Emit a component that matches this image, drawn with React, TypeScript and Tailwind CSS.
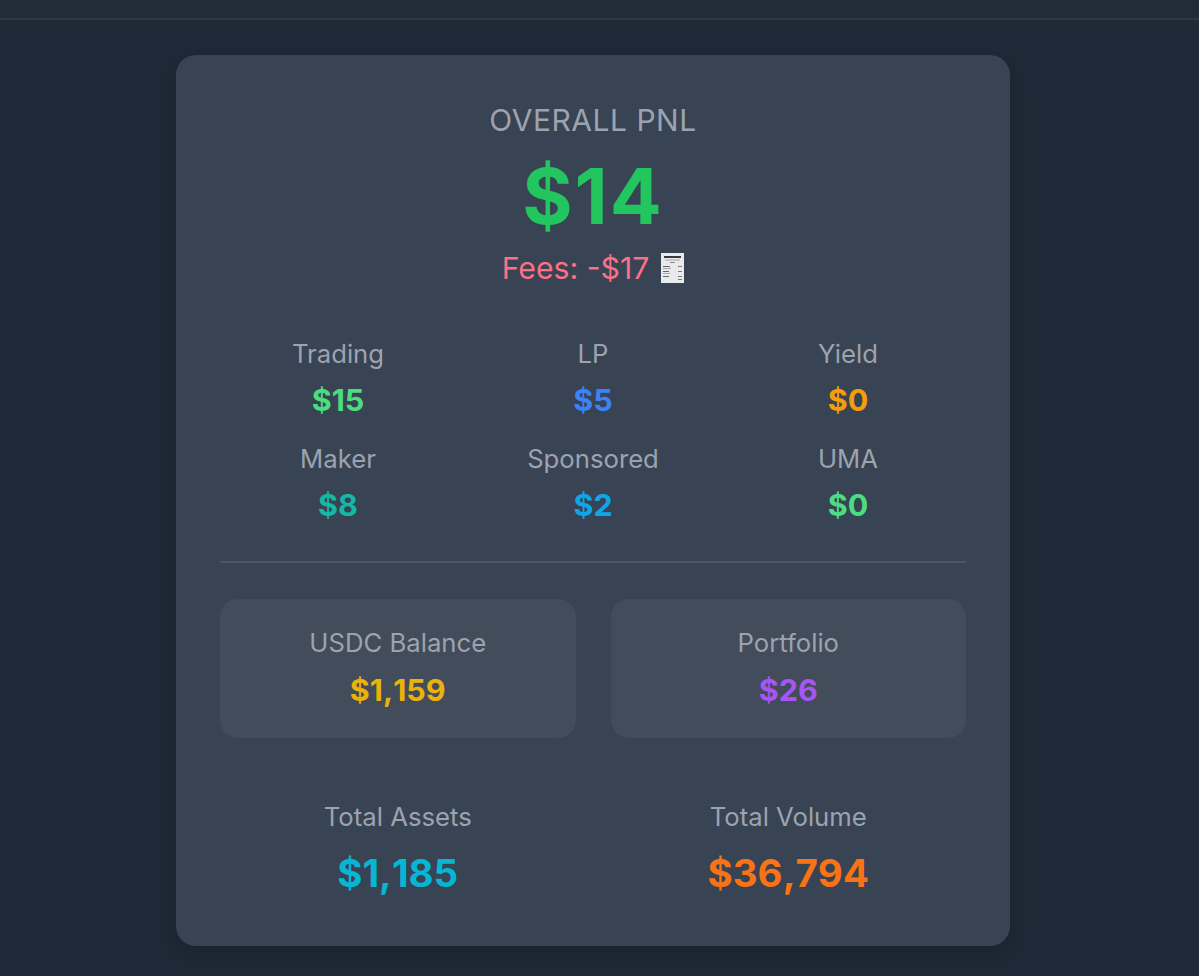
const fontStack = { fontFamily: "Inter, 'Noto Sans', sans-serif" };

const breakdown = [
  { label: "Trading", value: "$15", color: "text-[#4ade80]" },
  { label: "LP", value: "$5", color: "text-[#3b82f6]" },
  { label: "Yield", value: "$0", color: "text-[#f59e0b]" },
  { label: "Maker", value: "$8", color: "text-[#14b8a6]" },
  { label: "Sponsored", value: "$2", color: "text-[#0ea5e9]" },
  { label: "UMA", value: "$0", color: "text-[#4ade80]" },
];

function ReceiptIcon() {
  return (
    <svg width="23" height="30" viewBox="0 0 23 30" className="shrink-0">
      <rect width="23" height="30" fill="#e9eaeb" />
      <rect x="3" y="3" width="17" height="2" fill="#3a3a3a" />
      <rect x="4" y="6.5" width="15" height="1" fill="#a5a5a5" />
      <rect x="9" y="9" width="5" height="1" fill="#8a8a8a" />
      <rect x="2" y="13" width="7" height="1" fill="#6a6a6a" />
      <rect x="17" y="13" width="4" height="1" fill="#7a7a7a" />
      <rect x="2" y="15" width="8" height="1" fill="#aaaaaa" />
      <rect x="2" y="18" width="6" height="1" fill="#6a6a6a" />
      <rect x="17" y="18" width="4" height="1" fill="#7a7a7a" />
      <rect x="2" y="20" width="7" height="1" fill="#aaaaaa" />
      <rect x="2" y="23" width="6" height="1" fill="#6a6a6a" />
      <rect x="17" y="23" width="4" height="1" fill="#7a7a7a" />
      <rect x="17" y="26" width="4" height="1" fill="#7a7a7a" />
    </svg>
  );
}

export default function App() {
  return (
    <div className="min-h-[976px] bg-[#1f2937]" style={fontStack}>
      {/* Top bar */}
      <div className="h-5 border-b-2 border-[#2d3846] bg-[#222c38]" />

      <div className="ml-[176px] pt-[35px] pb-[30px]">
        <div className="w-[834px] rounded-[20px] bg-[#384354] px-11 pt-[46px] pb-[50px] shadow-[0_8px_24px_rgba(0,0,0,0.18)]">
          {/* Overall */}
          <div className="flex flex-col items-center">
            <p className="text-[30px] leading-[38px] tracking-[0.5px] text-[#9ca3af]">OVERALL PNL</p>
            <p className="mt-[17px] text-[77px] leading-[81px] font-bold tracking-[2px] [font-kerning:none] text-[#22c55e]">$14</p>
            <div className="mt-[12px] flex items-center gap-[12px] text-[30.2px] leading-[38px] text-[#fb7185]">
              <span>Fees: -$17</span>
              <ReceiptIcon />
            </div>
          </div>

          {/* Breakdown */}
          <div className="mt-[49px] grid grid-cols-3 gap-x-[19px] gap-y-[23px]">
            {breakdown.map((item) => (
              <div key={item.label} className="flex flex-col items-center">
                <p className="text-[25.7px] leading-[35px] text-[#9ca3af]">{item.label}</p>
                <p className={`mt-[11px] text-[30.5px] leading-[36px] font-bold [font-kerning:none] ${item.color}`}>{item.value}</p>
              </div>
            ))}
          </div>

          <div className="mt-[38px] h-[2px] bg-[#4b5563]" />

          {/* Balances */}
          <div className="mt-[36px] grid grid-cols-2 gap-[35px]">
            <div className="flex h-[139px] flex-col items-center justify-center rounded-[18px] bg-[#434c5a] pb-1">
              <p className="text-[25.7px] leading-[35px] text-[#9ca3af]">USDC Balance</p>
              <p className="mt-[12px] text-[30.5px] leading-[36px] font-bold [font-kerning:none] text-[#eab308]">$1,159</p>
            </div>
            <div className="flex h-[139px] flex-col items-center justify-center rounded-[18px] bg-[#434c5a] pb-1">
              <p className="text-[25.7px] leading-[35px] text-[#9ca3af]">Portfolio</p>
              <p className="mt-[12px] text-[30.5px] leading-[36px] font-bold [font-kerning:none] text-[#a855f7]">$26</p>
            </div>
          </div>

          {/* Totals */}
          <div className="mt-[61px] grid grid-cols-2 gap-[35px]">
            <div className="flex flex-col items-center">
              <p className="text-[25.7px] leading-[35px] text-[#9ca3af]">Total Assets</p>
              <p className="mt-[16px] text-[38.5px] leading-[46px] font-bold [font-kerning:none] text-[#06b6d4]">$1,185</p>
            </div>
            <div className="flex flex-col items-center">
              <p className="text-[25.7px] leading-[35px] text-[#9ca3af]">Total Volume</p>
              <p className="mt-[16px] text-[38.5px] leading-[46px] font-bold [font-kerning:none] text-[#f97316]">$36,794</p>
            </div>
          </div>
        </div>
      </div>
    </div>
  );
}
